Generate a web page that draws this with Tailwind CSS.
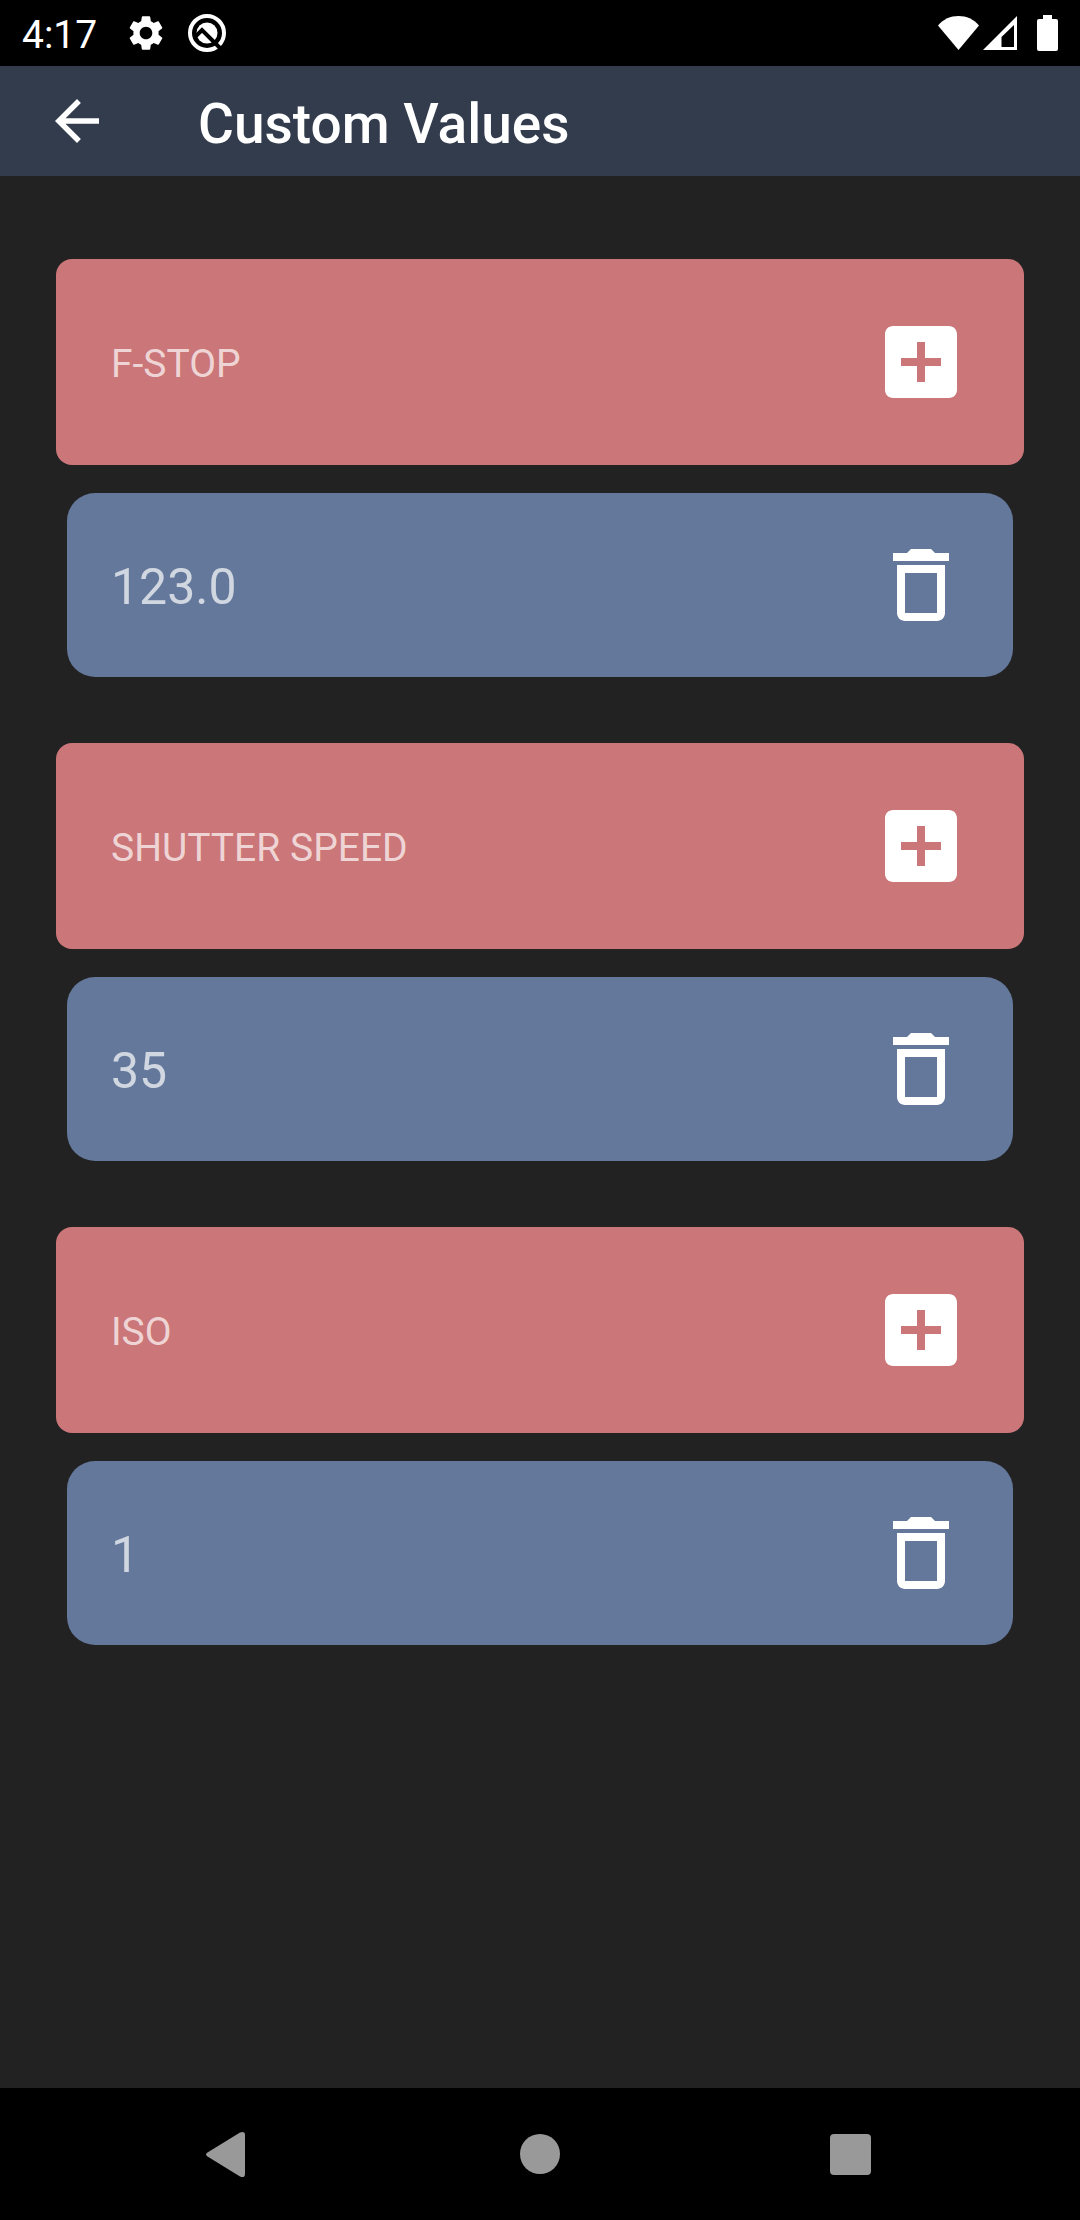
<!DOCTYPE html>
<html lang="en">
<head>
    <meta charset="UTF-8">
    <meta name="viewport" content="width=device-width, initial-scale=1.0">
    <title>Custom Values</title>
    <script src="https://cdn.jsdelivr.net/npm/@tailwindcss/browser@4"></script>
</head>
<body class="flex min-h-screen flex-col bg-[#222222] font-['Roboto',sans-serif] text-white">
    <!-- Icon shapes shared by the rows -->
    <svg class="hidden" aria-hidden="true">
        <symbol id="icon-add" viewBox="0 0 24 24">
            <path d="M19 3H5c-1.11 0-2 .9-2 2v14c0 1.1.89 2 2 2h14c1.1 0 2-.9 2-2V5c0-1.1-.9-2-2-2zm-2 10h-4v4h-2v-4H7v-2h4V7h2v4h4v2z" />
        </symbol>
        <symbol id="icon-delete" viewBox="0 0 24 24">
            <path fill-rule="evenodd" d="M6 19c0 1.1.9 2 2 2h8c1.1 0 2-.9 2-2V7H6v12zM8 9h8v10H8V9zM15.500 4l-1-1h-5l-1 1H5v2h14V4h-3.500z" />
        </symbol>
    </svg>

    <!-- Status bar -->
    <div class="flex h-[66px] items-center justify-between bg-black px-[22px]">
        <div class="flex items-center">
            <span class="pt-1 text-[39px] leading-none">4:17</span>
            <svg class="ml-7 size-[42px]" viewBox="0 0 24 24" fill="currentColor">
                <path d="M19.140 12.940c.04-.3.06-.61.06-.94 0-.32-.02-.64-.07-.94l2.030-1.580c.18-.14.23-.41.12-.61l-1.920-3.320c-.12-.22-.37-.29-.59-.22l-2.390.96c-.5-.38-1.030-.7-1.620-.94l-.36-2.540c-.04-.24-.24-.41-.48-.41h-3.840c-.24 0-.43.17-.47.41l-.36 2.540c-.59.24-1.130.57-1.620.94l-2.390-.96c-.22-.08-.47 0-.59.22L2.740 8.870c-.12.21-.08.47.12.61l2.030 1.580c-.05.3-.09.63-.09.94s.02.64.07.94l-2.030 1.580c-.18.14-.23.41-.12.61l1.920 3.320c.12.22.37.29.59.22l2.390-.96c.5.38 1.030.7 1.620.94l.36 2.540c.05.24.24.41.48.41h3.840c.24 0 .44-.17.47-.41l.36-2.540c.59-.24 1.130-.56 1.620-.94l2.390.96c.22.08.47 0 .59-.22l1.920-3.320c.12-.22.07-.47-.12-.61l-2.010-1.580zM12 15.600c-1.980 0-3.600-1.620-3.600-3.600s1.620-3.600 3.600-3.600 3.600 1.620 3.600 3.600-1.620 3.600-3.600 3.600z" />
            </svg>
            <svg class="ml-5 size-10" viewBox="0 0 40 40">
                <circle cx="20" cy="20" r="17" fill="none" stroke="white" stroke-width="4" />
                <circle cx="20" cy="20" r="10.500" fill="white" />
                <path d="M8 24l7-7 18 18" fill="none" stroke="black" stroke-width="4" />
            </svg>
        </div>
        <div class="flex items-center">
            <svg class="h-[34px] w-[41px]" viewBox="0 0 41 34" fill="currentColor">
                <path d="M0 9.500C5.500 3 12.500 0 20.500 0S35.500 3 41 9.500L20.500 34z" />
            </svg>
            <svg class="ml-1 size-[34px]" viewBox="0 0 34 34" fill="currentColor">
                <path fill-rule="evenodd" d="M0 34L34 0v34zM18.500 21v10H31V9z" />
            </svg>
            <svg class="ml-5 h-9 w-[21px]" viewBox="0 0 21 36" fill="currentColor">
                <path d="M6 0h9v4h4a2 2 0 0 1 2 2v28a2 2 0 0 1-2 2H2a2 2 0 0 1-2-2V6a2 2 0 0 1 2-2h4z" />
            </svg>
        </div>
    </div>

    <!-- App bar -->
    <header class="flex h-[110px] items-center bg-[#333c4d] px-11">
        <button type="button" aria-label="Back">
            <svg class="size-[66px]" viewBox="0 0 24 24" fill="currentColor">
                <path d="M20 11H7.830l5.590-5.590L12 4l-8 8 8 8 1.410-1.410L7.830 13H20v-2z" />
            </svg>
        </button>
        <h1 class="ml-[88px] pt-1.5 text-[55px] leading-none font-medium">Custom Values</h1>
    </header>

    <!-- Value lists -->
    <main class="flex grow flex-col gap-[66px] px-14 pt-[83px]">
        <section>
            <div class="flex h-[206px] items-center justify-between rounded-2xl bg-[#cb7678] px-[55px]">
                <h2 class="pt-1 text-[39px] leading-none text-white/70">F-STOP</h2>
                <button type="button" aria-label="Add f-stop"><svg class="size-24" fill="currentColor"><use href="#icon-add" /></svg></button>
            </div>
            <ul class="mt-7 px-[11px]">
                <li class="flex h-[184px] items-center justify-between rounded-[28px] bg-[#64789b] px-11">
                    <span class="pt-1 text-[50px] leading-none text-white/70">123.0</span>
                    <button type="button" aria-label="Delete 123.0"><svg class="size-24" fill="currentColor"><use href="#icon-delete" /></svg></button>
                </li>
            </ul>
        </section>

        <section>
            <div class="flex h-[206px] items-center justify-between rounded-2xl bg-[#cb7678] px-[55px]">
                <h2 class="pt-1 text-[39px] leading-none text-white/70">SHUTTER SPEED</h2>
                <button type="button" aria-label="Add shutter speed"><svg class="size-24" fill="currentColor"><use href="#icon-add" /></svg></button>
            </div>
            <ul class="mt-7 px-[11px]">
                <li class="flex h-[184px] items-center justify-between rounded-[28px] bg-[#64789b] px-11">
                    <span class="pt-1 text-[50px] leading-none text-white/70">35</span>
                    <button type="button" aria-label="Delete 35"><svg class="size-24" fill="currentColor"><use href="#icon-delete" /></svg></button>
                </li>
            </ul>
        </section>

        <section>
            <div class="flex h-[206px] items-center justify-between rounded-2xl bg-[#cb7678] px-[55px]">
                <h2 class="pt-1 text-[39px] leading-none text-white/70">ISO</h2>
                <button type="button" aria-label="Add ISO"><svg class="size-24" fill="currentColor"><use href="#icon-add" /></svg></button>
            </div>
            <ul class="mt-7 px-[11px]">
                <li class="flex h-[184px] items-center justify-between rounded-[28px] bg-[#64789b] px-11">
                    <span class="pt-1 text-[50px] leading-none text-white/70">1</span>
                    <button type="button" aria-label="Delete 1"><svg class="size-24" fill="currentColor"><use href="#icon-delete" /></svg></button>
                </li>
            </ul>
        </section>
    </main>

    <!-- Navigation bar -->
    <nav class="grid h-[132px] grid-cols-3 place-items-center bg-black px-[72px] text-[#999999]">
        <button type="button" aria-label="System back">
            <svg class="size-[60px]" viewBox="0 0 60 60" fill="currentColor">
                <path d="M9.500 28.500L42 8.500q5-2 5 2.500v39q0 4.500-5 2.500l-32.500-20q-3-2 0-4z" />
            </svg>
        </button>
        <button type="button" aria-label="Home">
            <svg class="size-[60px]" viewBox="0 0 60 60" fill="currentColor"><circle cx="30" cy="30" r="20" /></svg>
        </button>
        <button type="button" aria-label="Recent apps">
            <svg class="size-[60px]" viewBox="0 0 60 60" fill="currentColor"><rect x="8" y="10" width="41" height="41" rx="4" /></svg>
        </button>
    </nav>
</body>
</html>
